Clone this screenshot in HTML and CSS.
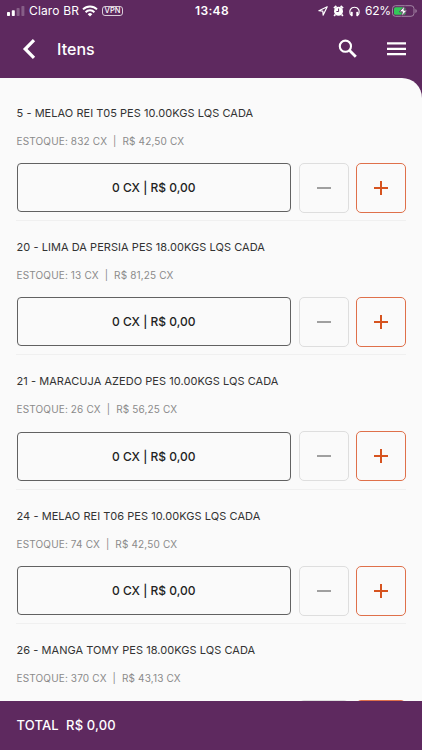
FILE: index.html
```html
<!DOCTYPE html>
<html lang="pt-BR">
<head>
<meta charset="utf-8">
<title>Itens</title>
<link rel="stylesheet" href="styles.css">
</head>
<body>
<div class="app">
  <header class="header">
    <div class="status">
      <div class="status-left">
        <svg class="signal" width="18" height="10" viewBox="0 0 18 10" fill="#fff"><rect y="6" width="3" height="4" rx=".7"/><rect x="4.8" y="4.2" width="3" height="5.8" rx=".7"/><rect x="9.6" y="2" width="3" height="8" rx=".7" opacity=".25"/><rect x="14.4" width="3" height="10" rx=".7" opacity=".25"/></svg>
        <span class="carrier">Claro BR</span>
        <svg class="wifi" width="16" height="12" viewBox="0 0 16 12" fill="none" stroke="#fff" stroke-width="2"><path d="M1 4.4a10 10 0 0 1 14 0M3.6 7.2a6.2 6.2 0 0 1 8.8 0"/><path d="M5.7 9.2a3.3 3.3 0 0 1 4.6 0L8 11.6z" fill="#fff" stroke="none"/></svg>
        <span class="vpn">VPN</span>
      </div>
      <span class="time">13:48</span>
      <div class="status-right">
        <svg width="10" height="10" viewBox="0 0 10 10" fill="none" stroke="#fff" stroke-width="1.2" stroke-linejoin="round"><path d="M9.2.8.9 4.7l3.9.4.4 4z"/></svg>
        <svg class="alarm" width="11" height="12" viewBox="0 0 11 12"><circle cx="5.5" cy="6.2" r="4.5" fill="#fff"/><path d="M.9 3.2 3.4 1M10.1 3.2 7.6 1M2.2 9.5 1.2 11M8.8 9.5l1 1.5" stroke="#fff" stroke-width="1.7"/><path d="M5.6 3.5v3H3.4" fill="none" stroke="#5e295f"/></svg>
        <svg class="phones" width="11" height="11" viewBox="0 0 11 11"><path d="M1.6 9C-.4 4.4 2 1.2 5.5 1.2S11.4 4.4 9.4 9" fill="none" stroke="#fff" stroke-width="1.1"/><rect x="1.7" y="5.8" width="2" height="4.4" rx=".8" fill="#fff"/><rect x="7.3" y="5.8" width="2" height="4.4" rx=".8" fill="#fff"/></svg>
        <span class="percent">62%</span>
        <svg class="battery" width="25" height="12" viewBox="0 0 25 12"><rect x=".5" y=".7" width="21.5" height="10.6" rx="3" fill="none" stroke="#a384a4"/><path d="M23.4 4v4q1.4-.6 1.4-2t-1.4-2" fill="#a384a4"/><rect x="2" y="2.2" width="11.5" height="7.6" rx="1.6" fill="#34c759"/><path d="M12.8.8 7.3 6.8h3.2L9.3 11.4 15.2 5.2h-3.3z" fill="#fff" stroke="#5e295f" stroke-width=".8"/></svg>
      </div>
    </div>
    <div class="toolbar">
      <svg class="back" width="14" height="22" viewBox="0 0 14 22" fill="none" stroke="#fff" stroke-width="3.2"><path d="M12 2.2 3.2 11l8.8 8.8"/></svg>
      <h1 class="title">Itens</h1>
      <svg class="search" width="20" height="20" viewBox="0 0 20 20" fill="none" stroke="#fff"><circle cx="7.4" cy="7.2" r="5.6" stroke-width="2.1"/><path d="m11.6 11.4 6.2 6.3" stroke-width="2.8"/></svg>
      <svg width="19" height="14" viewBox="0 0 19 14" fill="#fff"><path d="M0 .3h19v2.2H0zM0 5.7h19v2.2H0zM0 11.1h19v2.2H0z"/></svg>
    </div>
  </header>
  <main class="list">
    <section class="item">
      <h2 class="name">5 - MELAO REI T05 PES 10.00KGS LQS CADA</h2>
      <p class="stock">ESTOQUE: 832 CX&nbsp; |&nbsp; R$ 42,50 CX</p>
      <div class="controls"><div class="amount">0 CX | R$ 0,00</div><button class="step minus" aria-label="Remover"></button><button class="step plus" aria-label="Adicionar"></button></div>
    </section>
    <section class="item">
      <h2 class="name">20 - LIMA DA PERSIA PES 18.00KGS LQS CADA</h2>
      <p class="stock">ESTOQUE: 13 CX&nbsp; |&nbsp; R$ 81,25 CX</p>
      <div class="controls"><div class="amount">0 CX | R$ 0,00</div><button class="step minus" aria-label="Remover"></button><button class="step plus" aria-label="Adicionar"></button></div>
    </section>
    <section class="item">
      <h2 class="name">21 - MARACUJA AZEDO PES 10.00KGS LQS CADA</h2>
      <p class="stock">ESTOQUE: 26 CX&nbsp; |&nbsp; R$ 56,25 CX</p>
      <div class="controls"><div class="amount">0 CX | R$ 0,00</div><button class="step minus" aria-label="Remover"></button><button class="step plus" aria-label="Adicionar"></button></div>
    </section>
    <section class="item">
      <h2 class="name">24 - MELAO REI T06 PES 10.00KGS LQS CADA</h2>
      <p class="stock">ESTOQUE: 74 CX&nbsp; |&nbsp; R$ 42,50 CX</p>
      <div class="controls"><div class="amount">0 CX | R$ 0,00</div><button class="step minus" aria-label="Remover"></button><button class="step plus" aria-label="Adicionar"></button></div>
    </section>
    <section class="item">
      <h2 class="name">26 - MANGA TOMY PES 18.00KGS LQS CADA</h2>
      <p class="stock">ESTOQUE: 370 CX&nbsp; |&nbsp; R$ 43,13 CX</p>
      <div class="controls"><div class="amount amount-low"></div><button class="step minus" aria-label="Remover"></button><button class="step plus" aria-label="Adicionar"></button></div>
    </section>
  </main>
  <footer class="total">TOTAL&nbsp; R$ 0,00</footer>
</div>
</body>
</html>
```
FILE: styles.css
```css
* { box-sizing: border-box; }
body { margin: 0; font-family: Inter, "Liberation Sans", sans-serif; }
.app { width: 422px; height: 750px; overflow: hidden; display: flex; flex-direction: column; background: #5e295f; color: #fff; }
svg { display: block; flex: none; }
.header { height: 78px; flex: none; }
.status { height: 22px; padding: 0 5px 0 7px; display: grid; grid-template-columns: 1fr auto 1fr; align-items: center; font-size: 12px; line-height: 22px; white-space: nowrap; }
.status-left, .status-right { display: flex; align-items: center; }
.status-right { justify-content: flex-end; }
.carrier { width: 49px; margin-left: 4px; letter-spacing: .15px; }
.wifi { margin-left: 4px; }
.vpn { width: 21px; height: 10px; margin-left: 4px; border: 1px solid #d9cbd9; border-radius: 3px; font-size: 7.5px; line-height: 8px; text-align: center; font-weight: 500; }
.time { font-weight: 600; letter-spacing: .35px; }
.alarm { margin-left: 5px; }
.phones { margin-left: 5px; }
.percent { width: 25px; margin-left: 5px; letter-spacing: -.2px; }
.battery { margin-left: 2px; }
.toolbar { height: 54px; padding: 0 16px 0 22px; display: flex; align-items: center; }
.title { margin: 0 auto 0 21px; font-size: 16px; font-weight: 500; letter-spacing: .05px; }
.search { margin-right: 29px; }
.list { flex: 1; min-height: 0; overflow: hidden; padding: 8.4px 16px 0; background: #fafafa; border-top-right-radius: 20px; color: #333; }
.item { height: 134.4px; padding-top: 17.2px; border-bottom: 1px solid #f0f0f0; }
.name { margin: 0 0 0 .5px; font-size: 11px; line-height: 18px; font-weight: 400; letter-spacing: .05px; white-space: nowrap; }
.stock { margin: 11px 0 14px .5px; font-size: 10px; line-height: 16px; letter-spacing: .15px; color: #8a8a8a; white-space: nowrap; }
.controls { display: flex; align-items: center; gap: 7.5px; height: 50px; }
.amount { flex: 1; height: 49px; border: 1px solid #626262; border-radius: 4px; margin-left: .5px; display: flex; align-items: center; justify-content: center; font-size: 12px; font-weight: 500; letter-spacing: 0; color: #222; }
.amount-low { align-self: flex-end; }
.step { width: 50px; height: 50px; flex: none; padding: 0; border: 1px solid #dedede; border-radius: 5px; background: linear-gradient(#a0a0a0, #a0a0a0) center / 14px 2px no-repeat; }
.plus { border-color: #df704a; background: linear-gradient(#d6531f, #d6531f) center / 14px 2px no-repeat, linear-gradient(#d6531f, #d6531f) center / 2px 14px no-repeat; }
.total { height: 49px; flex: none; padding-left: 16.5px; line-height: 49px; font-size: 13px; font-weight: 500; letter-spacing: .15px; }
```
